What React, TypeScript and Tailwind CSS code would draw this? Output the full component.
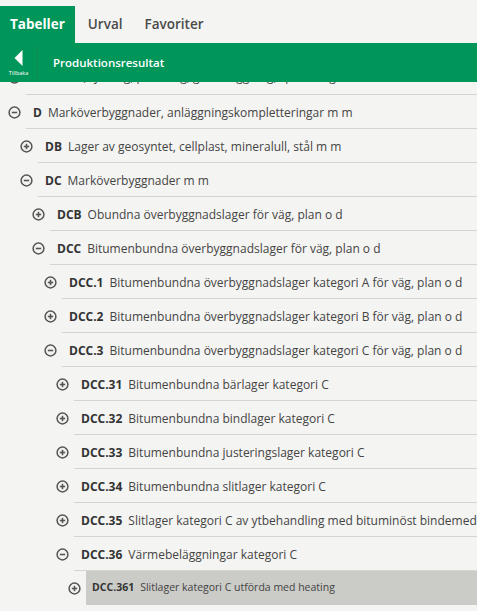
import React from 'react';

type Row = {
  level: number;
  code: string;
  text: string;
  open: boolean;
  active?: boolean;
};

const rows: Row[] = [
  { level: 0, code: 'D', text: 'Marköverbyggnader, anläggningskompletteringar m m', open: true },
  { level: 1, code: 'DB', text: 'Lager av geosyntet, cellplast, mineralull, stål m m', open: false },
  { level: 1, code: 'DC', text: 'Marköverbyggnader m m', open: true },
  { level: 2, code: 'DCB', text: 'Obundna överbyggnadslager för väg, plan o d', open: false },
  { level: 2, code: 'DCC', text: 'Bitumenbundna överbyggnadslager för väg, plan o d', open: true },
  { level: 3, code: 'DCC.1', text: 'Bitumenbundna överbyggnadslager kategori A för väg, plan o d', open: false },
  { level: 3, code: 'DCC.2', text: 'Bitumenbundna överbyggnadslager kategori B för väg, plan o d', open: false },
  { level: 3, code: 'DCC.3', text: 'Bitumenbundna överbyggnadslager kategori C för väg, plan o d', open: true },
  { level: 4, code: 'DCC.31', text: 'Bitumenbundna bärlager kategori C', open: false },
  { level: 4, code: 'DCC.32', text: 'Bitumenbundna bindlager kategori C', open: false },
  { level: 4, code: 'DCC.33', text: 'Bitumenbundna justeringslager kategori C', open: false },
  { level: 4, code: 'DCC.34', text: 'Bitumenbundna slitlager kategori C', open: false },
  { level: 4, code: 'DCC.35', text: 'Slitlager kategori C av ytbehandling med bituminöst bindemedel', open: false },
  { level: 4, code: 'DCC.36', text: 'Värmebeläggningar kategori C', open: true },
  { level: 5, code: 'DCC.361', text: 'Slitlager kategori C utförda med heating', open: false, active: true },
];

const indent = ['pl-0', 'pl-3', 'pl-6', 'pl-9', 'pl-12', 'pl-15'];

const ToggleIcon = ({ open }: { open: boolean }) => (
  <svg width="13" height="13" viewBox="0 0 13 13" className="block">
    <circle cx="6.5" cy="6.5" r="5.4" fill="none" stroke="#555" strokeWidth="1.5" />
    <line x1="3.8" y1="6.5" x2="9.2" y2="6.5" stroke="#555" strokeWidth="1.6" />
    {!open && <line x1="6.5" y1="3.8" x2="6.5" y2="9.2" stroke="#555" strokeWidth="1.6" />}
  </svg>
);

const TreeRow = ({ row }: { row: Row }) => (
  <div className={`flex h-[34px] ${indent[row.level]}`}>
    <div className="w-[26px] flex items-center justify-center pl-[2px]">
      <ToggleIcon open={row.open} />
    </div>
    <div
      className={
        row.active
          ? 'flex-1 flex items-center pl-[6px] bg-[#cbcbc7] whitespace-nowrap overflow-hidden text-[10.5px]'
          : 'flex-1 flex items-center pl-[7px] pt-[2px] border-b border-[#d4d4d0] whitespace-nowrap overflow-hidden text-[12px]'
      }
    >
      <span className="font-bold text-[#333]">{row.code}</span>
      <span className="ml-[6px] text-[#444]">{row.text}</span>
    </div>
  </div>
);

export default function App() {
  return (
    <div
      className="w-[477px] h-[611px] overflow-hidden bg-[#f4f4f2] flex flex-col"
      style={{ fontFamily: '"Open Sans", "Liberation Sans", sans-serif' }}
    >
      <div className="h-[43px] flex items-end shrink-0 bg-[#f4f4f2]">
        <div className="h-[37px] px-[10px] flex items-center bg-[#00965a] text-white font-bold text-[13.5px]">
          Tabeller
        </div>
        <div className="h-[37px] flex items-center ml-[13px] text-[#4a4a4a] font-semibold text-[13.5px]">Urval</div>
        <div className="h-[37px] flex items-center ml-[22px] text-[#4a4a4a] font-semibold text-[13.5px]">Favoriter</div>
      </div>
      <div className="h-[39px] flex bg-[#00965a] shrink-0">
        <div className="w-[38px] flex flex-col items-center justify-center border-r border-[#0f8a55] my-[2px]">
          <svg width="9" height="16" viewBox="0 0 9 16" className="block mt-[2px]">
            <polygon points="8.5,0 0.5,8 8.5,16" fill="#fff" />
          </svg>
          <span className="text-[5.5px] leading-none text-white mt-[5px]">Tillbaka</span>
        </div>
        <div className="flex items-center pl-[15px] text-white font-semibold text-[11.5px]">Produktionsresultat</div>
      </div>
      <div className="flex-1 overflow-hidden">
        <div className="-mt-[21px]">
          <div className="flex h-[34px]">
            <div className="w-[26px] flex items-center justify-center pl-[2px] pb-[2px]">
              <ToggleIcon open={false} />
            </div>
            <div className="flex-1 flex items-center pl-[7px] pb-[2px] border-b border-[#d4d4d0] whitespace-nowrap overflow-hidden text-[12px]">
              <span className="font-bold text-[#333]">C</span>
              <span className="ml-[6px] text-[#444]">Schakt, fyllning, packning, grundläggning, spontning m m</span>
            </div>
          </div>
          {rows.map(r => (
            <TreeRow key={r.code} row={r} />
          ))}
        </div>
      </div>
    </div>
  );
}
